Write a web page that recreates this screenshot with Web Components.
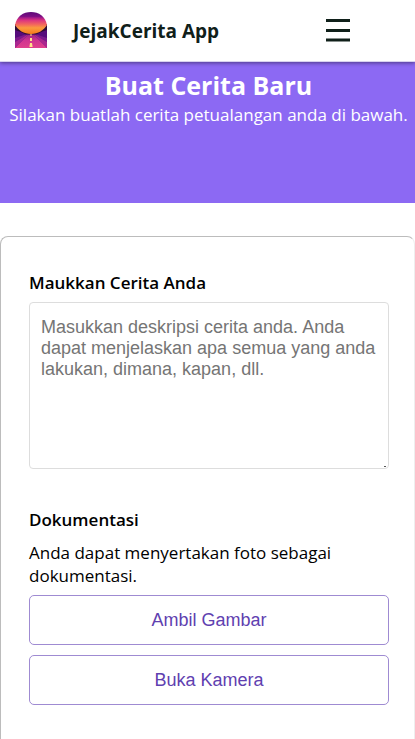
<!DOCTYPE html>
<html lang="id">
<head>
<meta charset="utf-8">
<meta name="viewport" content="width=device-width, initial-scale=1">
<title>JejakCerita App</title>
<style>
  body { margin: 0; background: #fff; color: #000; font: 17px/23px "Open Sans", "Noto Sans", sans-serif; overflow-x: hidden; }
</style>
</head>
<body>
<story-app></story-app>

<template id="t-logo">
  <style>
    :host { display: block; width: 32px; height: 36px; margin-bottom: 2px; }
    svg { display: block; width: 100%; height: 100%; }
  </style>
  <svg viewBox="0 0 32 36" aria-hidden="true">
    <defs>
      <linearGradient id="sky" x1="0" y1="0" x2="0" y2="1">
        <stop offset="0" stop-color="#5d0a78"/><stop offset=".2" stop-color="#7c0f83"/>
        <stop offset=".26" stop-color="#a51b88"/><stop offset=".38" stop-color="#dc357f"/>
        <stop offset=".56" stop-color="#f2645f"/><stop offset=".72" stop-color="#fb9a3e"/>
        <stop offset="1" stop-color="#f57a1c"/>
      </linearGradient>
      <linearGradient id="road" x1="0" y1="0" x2="0" y2="1">
        <stop offset="0" stop-color="#8c1f80"/><stop offset=".5" stop-color="#d03490"/><stop offset="1" stop-color="#e0408e"/>
      </linearGradient>
    </defs>
    <path d="M0 12h32v24H0z" fill="#560c7c"/>
    <path d="M0 26 15 21 0 30zM32 26 17 21 32 30z" fill="#7c1a8c"/>
    <path d="M0 30 15 21 0 36zM32 30 17 21 32 36z" fill="#a9268f"/>
    <path d="M15 21h2l15 15H0z" fill="url(#road)"/>
    <path d="M0 12h32v6q-5 1-11 4.500H11Q5 19 0 18z" fill="#2d0b35"/>
    <path d="M0 13C2 4 8 0 16 0s14 4 16 13c-3 5-9 9-16 9S3 18 0 13z" fill="url(#sky)"/>
    <path d="M15.500 22h1v2h-1zM15 26h2v3h-2zM15 31h2l.6 4h-3.200z" fill="#ffe18a"/>
  </svg>
</template>

<template id="t-header">
  <style>
    :host { display: flex; align-items: center; position: relative; z-index: 1; box-sizing: border-box; height: 62px; padding: 0 64px 0 15px; background: #fff; color: #10201a; border-bottom: 1px solid #d8d2ee; box-shadow: 0 1px 4px rgba(0,0,0,.45); }
    a { display: flex; align-items: center; gap: 26px; color: inherit; text-decoration: none; font-size: 19px; line-height: 26px; font-weight: 700; white-space: nowrap; }
    button { margin: 0 0 0 auto; padding: 0; border: 0; background: none; color: inherit; cursor: pointer; }
    svg { display: block; width: 26px; height: 24px; }
  </style>
  <a href="#/"><story-logo></story-logo><slot></slot></a>
  <button type="button" aria-label="Menu"><svg viewBox="0 0 26 24"><path d="M1 1.500h24M1 11.500h24M1 21h24" stroke="currentColor" stroke-width="3"/></svg></button>
</template>

<template id="t-hero">
  <style>
    :host { display: block; box-sizing: border-box; min-height: 141px; padding: 6px 6px 6px 8px; background: #8c69f3; color: #fff; text-align: center; }
    h1 { margin: 0; font-size: 25px; line-height: 35px; font-weight: 700; }
    p { margin: 0; }
  </style>
  <h1><slot name="title"></slot></h1>
  <p><slot></slot></p>
</template>

<template id="t-button">
  <style>
    :host { display: block; }
    button { display: block; width: 100%; height: 50px; margin: 0; padding: 0; border: 1px solid #9f8bd2; border-radius: 5px; background: #fff; color: #6040b0; font: 18px/21px "Liberation Sans", sans-serif; cursor: pointer; }
  </style>
  <button type="button"><slot></slot></button>
</template>

<template id="t-form">
  <style>
    :host { display: block; margin-top: 33px; }
    form { box-sizing: border-box; margin: 0; padding: 34px 25px 64px 28px; border: 1px solid #bcbcbc; border-right-color: #eee; border-radius: 8px; }
    label, h2 { display: block; margin: 0; font-size: 17px; line-height: 24px; font-weight: 600; }
    textarea { display: block; box-sizing: border-box; width: 100%; height: 167px; margin: 7px 0 39px; padding: 14px 11px; border: 1px solid #ddd; border-radius: 4px; background: #fff; color: #000; font: 18px/21px "Liberation Sans", sans-serif; resize: vertical; }
    textarea::placeholder { color: #757575; }
    textarea::-webkit-resizer { background: linear-gradient(#555, #555) right 2px bottom 1px / 2px 1px no-repeat; }
    p { margin: 9px 0 8px; }
    .actions { display: grid; gap: 10px; }
  </style>
  <form>
    <label for="story">Maukkan Cerita Anda</label>
    <textarea id="story" placeholder="Masukkan deskripsi cerita anda. Anda dapat menjelaskan apa semua yang anda lakukan, dimana, kapan, dll."></textarea>
    <h2>Dokumentasi</h2>
    <p>Anda dapat menyertakan foto sebagai dokumentasi.</p>
    <div class="actions">
      <story-button>Ambil Gambar</story-button>
      <story-button>Buka Kamera</story-button>
    </div>
  </form>
</template>

<template id="t-app">
  <style>:host { display: block; }</style>
  <story-header>JejakCerita App</story-header>
  <main>
    <story-hero><span slot="title">Buat Cerita Baru</span>Silakan buatlah cerita petualangan anda di bawah.</story-hero>
    <story-form></story-form>
  </main>
</template>

<script>
  class StoryElement extends HTMLElement {
    constructor() {
      super();
      const template = document.getElementById(this.constructor.template);
      this.attachShadow({ mode: "open" }).append(template.content.cloneNode(true));
    }
  }
  class StoryLogo extends StoryElement { static template = "t-logo"; }
  class StoryHeader extends StoryElement { static template = "t-header"; }
  class StoryHero extends StoryElement { static template = "t-hero"; }
  class StoryButton extends StoryElement { static template = "t-button"; }
  class StoryForm extends StoryElement { static template = "t-form"; }
  class StoryApp extends StoryElement { static template = "t-app"; }
  customElements.define("story-logo", StoryLogo);
  customElements.define("story-header", StoryHeader);
  customElements.define("story-hero", StoryHero);
  customElements.define("story-button", StoryButton);
  customElements.define("story-form", StoryForm);
  customElements.define("story-app", StoryApp);
</script>
</body>
</html>
